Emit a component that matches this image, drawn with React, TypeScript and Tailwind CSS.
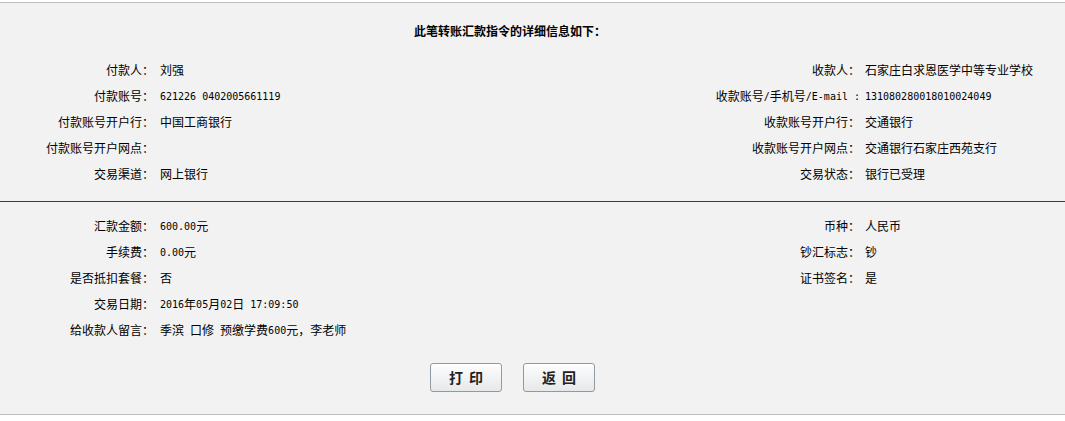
import React from "react";

const cjk = "font-['SimSun','Noto_Sans_CJK_SC',sans-serif]";

function Txt({ text }: { text: string }) {
  const parts = text.split(/([\x20-\x7e]+)/);
  return (
    <>
      {parts.map((p, i) =>
        i % 2 === 1 ? (
          <span key={i} className="font-['DejaVu_Sans_Mono',monospace] text-[10px] whitespace-pre">
            {p}
          </span>
        ) : (
          <span key={i}>{p}</span>
        )
      )}
    </>
  );
}

interface Row {
  l: string;
  lv?: string;
  r?: string;
  rv?: string;
}

const top: Row[] = [
  { l: "付款人：", lv: "刘强", r: "收款人：", rv: "石家庄白求恩医学中等专业学校" },
  { l: "付款账号：", lv: "621226 0402005661119", r: "收款账号/手机号/E-mail :", rv: "131080280018010024049" },
  { l: "付款账号开户行：", lv: "中国工商银行", r: "收款账号开户行：", rv: "交通银行" },
  { l: "付款账号开户网点：", lv: "", r: "收款账号开户网点：", rv: "交通银行石家庄西苑支行" },
  { l: "交易渠道：", lv: "网上银行", r: "交易状态：", rv: "银行已受理" },
];

const bottom: Row[] = [
  { l: "汇款金额：", lv: "600.00元", r: "币种：", rv: "人民币" },
  { l: "手续费：", lv: "0.00元", r: "钞汇标志：", rv: "钞" },
  { l: "是否抵扣套餐：", lv: "否", r: "证书签名：", rv: "是" },
  { l: "交易日期：", lv: "2016年05月02日 17:09:50" },
  { l: "给收款人留言：", lv: "季滨 口修 预缴学费600元，李老师" },
];

function Rows({ rows }: { rows: Row[] }) {
  return (
    <div className="grid grid-cols-[160px_1fr_212px_200px]">
      {rows.map((row, i) => (
        <React.Fragment key={i}>
          <div className="h-[26px] flex items-center justify-end pr-[6px] whitespace-nowrap">
            <Txt text={row.l} />
          </div>
          <div className="h-[26px] flex items-center whitespace-nowrap">
            <Txt text={row.lv || ""} />
          </div>
          <div className="h-[26px] flex items-center justify-end pr-[5px] whitespace-nowrap">
            <Txt text={row.r || ""} />
          </div>
          <div className="h-[26px] flex items-center whitespace-nowrap">
            <Txt text={row.rv || ""} />
          </div>
        </React.Fragment>
      ))}
    </div>
  );
}

function Btn({ label }: { label: string }) {
  return (
    <button className="w-[72px] h-[29px] rounded-[3px] border border-[#8f9aa5] bg-gradient-to-b from-[#fdfdfd] to-[#e6e8ea] shadow-[inset_0_1px_0_#fff] text-[14px] font-bold text-[#222] font-['Noto_Sans_CJK_SC',sans-serif] flex items-center justify-center gap-[6px]">
      {label.split("").map((c, i) => (
        <span key={i}>{c}</span>
      ))}
    </button>
  );
}

export default function App() {
  return (
    <div className={`w-[1065px] h-[421px] bg-white pt-[2px] text-[12px] text-black ${cjk}`}>
      <div className="border-t border-[#bdbdbd] border-b bg-[#f2f2f2] h-[413px]">
        <div className="h-[54px] flex items-center justify-center pr-[45px] pt-[1px] font-bold">
          此笔转账汇款指令的详细信息如下：
        </div>
        <Rows rows={top} />
        <div className="h-[14px]" />
        <div className="h-px bg-[#c80000]" />
        <div className="h-[11px]" />
        <Rows rows={bottom} />
        <div className="flex justify-center gap-[21px] pr-[40px] pt-[20px]">
          <Btn label="打印" />
          <Btn label="返回" />
        </div>
      </div>
    </div>
  );
}
